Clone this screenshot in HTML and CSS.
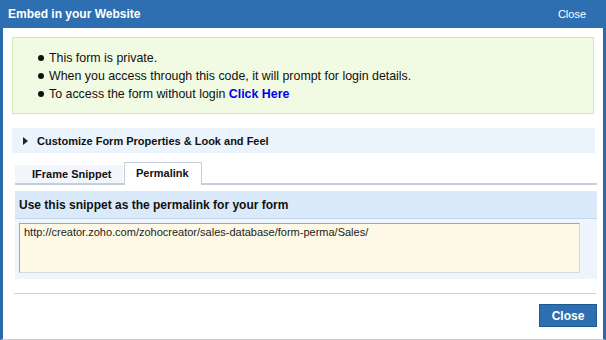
FILE: index.html
```html
<!DOCTYPE html>
<html lang="en">
<head>
    <meta charset="UTF-8">
    <title>Embed in your Website</title>
    <link rel="stylesheet" href="styles.css">
</head>
<body>
    <div class="dialog">
        <div class="titlebar">
            <span class="title">Embed in your Website</span>
            <a class="title-close" href="#">Close</a>
        </div>
        <div class="content">
            <div class="note">
                <ul>
                    <li>This form is private.</li>
                    <li>When you access through this code, it will prompt for login details.</li>
                    <li>To access the form without login <a href="#">Click Here</a></li>
                </ul>
            </div>
            <div class="customize">
                <span class="arrow"></span>
                Customize Form Properties &amp; Look and Feel
            </div>
            <div class="tabs">
                <div class="tab">IFrame Snippet</div>
                <div class="tab active">Permalink</div>
            </div>
            <div class="panel">
                <div class="panel-head">Use this snippet as the permalink for your form</div>
                <div class="snippet">http://creator.zoho.com/zohocreator/sales-database/form-perma/Sales/</div>
            </div>
            <div class="divider"></div>
            <div class="footer">
                <button class="btn">Close</button>
            </div>
        </div>
    </div>
</body>
</html>
```

FILE: styles.css
```css
*{
    margin: 0;
    padding: 0;
    box-sizing: border-box;
}

body{
    background-color: white;
    font-family: "Liberation Sans", Arial, sans-serif;
}

.dialog{
    width: 606px;
    height: 340px;
    border-left: 3px solid #2a6aab;
    border-right: 3px solid #2a6aab;
    border-bottom: 1px solid #cccccc;
    background-color: white;
    display: flex;
    flex-direction: column;
}

.titlebar{
    height: 28px;
    margin: 0 -3px;
    padding: 0 20px 0 8px;
    background-color: #2d6fb0;
    display: flex;
    align-items: center;
    justify-content: space-between;
    color: white;
}

.title{
    font-size: 12px;
    font-weight: bold;
}

.title-close{
    color: white;
    font-size: 11px;
    text-decoration: none;
}

.content{
    padding: 9px 9px 0 9px;
}

.note{
    height: 77px;
    background-color: #f1fbe3;
    border: 1px solid #d3e8b9;
    padding-top: 11px;
    font-size: 12.4px;
    color: #111;
}

.note ul{
    list-style: none;
    padding-left: 24px;
}

.note li{
    height: 18px;
    line-height: 18px;
    position: relative;
    padding-left: 12px;
}

.note li::before{
    content: "";
    position: absolute;
    left: 1px;
    top: 6px;
    width: 6px;
    height: 6px;
    border-radius: 50%;
    background-color: #111;
}

.note a{
    color: #0000ee;
    font-weight: bold;
    text-decoration: none;
}

.customize{
    margin-top: 14px;
    margin-right: -1px;
    height: 25px;
    background-color: #ebf4fc;
    display: flex;
    align-items: center;
    padding-left: 11px;
    font-size: 11px;
    font-weight: bold;
    color: #111;
}

.arrow{
    width: 0;
    height: 0;
    border-top: 4px solid transparent;
    border-bottom: 4px solid transparent;
    border-left: 5px solid #222;
    margin-right: 9px;
}

.tabs{
    margin: 10px -3px 0 3px;
    height: 22px;
    border-bottom: 2px solid #c5cfdc;
    display: flex;
    align-items: flex-end;
    font-size: 11px;
    font-weight: bold;
    color: #111;
}

.tab{
    height: 18px;
    width: 108px;
    padding-left: 17px;
    line-height: 18px;
    background-color: #f2f6fb;
    margin-right: 1px;
}

.tab.active{
    height: 23px;
    width: 78px;
    margin-bottom: -2px;
    line-height: 21px;
    padding-left: 11px;
    background-color: white;
    border: 1px solid #c5cfdc;
    border-bottom: none;
}

.panel{
    margin: 6px -3px 0 3px;
    background-color: #eef5fc;
    padding-bottom: 6px;
}

.panel-head{
    height: 28px;
    background-color: #dbeafb;
    border-bottom: 1px solid #c5d6ea;
    padding-left: 4px;
    display: flex;
    align-items: center;
    font-size: 12px;
    font-weight: bold;
    color: #111;
}

.snippet{
    margin: 4px 17px 0 4px;
    height: 50px;
    background-color: #fef8e6;
    border: 1px solid #a5a5a5;
    border-right-color: #d8d8d8;
    border-bottom-color: #d8d8d8;
    padding: 2px 4px;
    font-size: 11px;
    color: #222;
}

.divider{
    margin: 14px -2px 0 2px;
    height: 1px;
    background-color: #c1d3e8;
}

.footer{
    display: flex;
    justify-content: flex-end;
    padding-top: 10px;
    margin-right: -3px;
}

.btn{
    width: 58px;
    height: 23px;
    background-color: #2d6fb0;
    border: 1px solid #1f5791;
    color: white;
    font-family: "Liberation Sans", Arial, sans-serif;
    font-size: 12px;
    font-weight: bold;
    cursor: pointer;
}
```
